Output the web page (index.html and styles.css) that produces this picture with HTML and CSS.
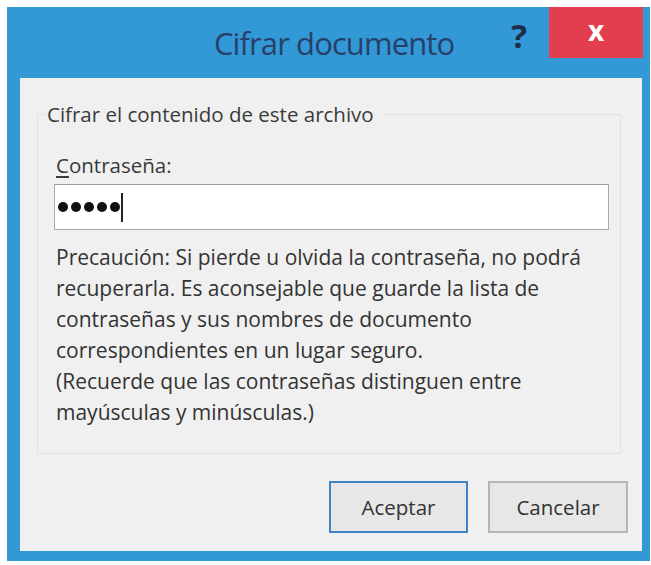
FILE: index.html
```html
<!DOCTYPE html>
<html lang="es">
<head>
<meta charset="utf-8">
<title>Cifrar documento</title>
<link rel="stylesheet" href="styles.css">
</head>
<body>
<div class="window">
  <div class="titlebar">
    <div class="title">Cifrar documento</div>
    <div class="help">?</div>
    <div class="close">x</div>
  </div>
  <div class="panel">
    <fieldset class="group">
      <legend class="group-title">Cifrar el contenido de este archivo</legend>
      <label class="field-label" for="pwd"><span class="accel">C</span>ontraseña:</label>
      <div class="input" id="pwd">
        <span class="dots"><i></i><i></i><i></i><i></i><i></i></span><span class="caret"></span>
      </div>
      <p class="note">Precaución: Si pierde u olvida la contraseña, no podrá recuperarla. Es aconsejable que guarde la lista de contraseñas y sus nombres de documento correspondientes en un lugar seguro.<br>(Recuerde que las contraseñas distinguen entre mayúsculas y minúsculas.)</p>
    </fieldset>
    <div class="actions">
      <button class="btn btn-default">Aceptar</button>
      <button class="btn">Cancelar</button>
    </div>
  </div>
</div>
</body>
</html>
```

FILE: styles.css
```css
html, body {
  margin: 0;
  padding: 0;
  background: #ffffff;
}

body {
  font-family: "Open Sans", "Noto Sans", sans-serif;
  color: #333333;
}

.window {
  width: 643px;
  height: 554px;
  margin: 7px 0 0 7px;
  background: #3398d6;
  display: flex;
  flex-direction: column;
  box-sizing: border-box;
}

/* title bar: centered caption, help glyph and red close button */
.titlebar {
  height: 71px;
  display: flex;
  align-items: flex-start;
}

.title {
  flex: 1;
  text-align: center;
  font-size: 31px;
  color: #27406a;
  letter-spacing: -0.9px;
  line-height: 72px;
  padding-left: 150px;
}

.help {
  font-size: 33px;
  font-weight: 700;
  color: #1d2f48;
  line-height: 58px;
  margin-right: 22px;
}

.close {
  width: 94px;
  height: 51px;
  margin-right: 7px;
  background: #e23e4e;
  color: #ffffff;
  font-size: 28px;
  font-weight: 700;
  text-align: center;
  line-height: 46px;
}

.panel {
  flex: 1;
  margin: 0 8px 10px 13px;
  background: #f0f0f0;
  display: flex;
  flex-direction: column;
}

.group {
  margin: 24px 21px 0 17px;
  padding: 0 11px 25px 18px;
  border: 1px solid #e0e0e0;
  min-width: 0;
}

.group-title {
  font-size: 20.5px;
  padding: 0 8px 0 3px;
  margin-left: -12px;
  line-height: 24px;
  color: #3a3a3a;
}

.field-label {
  display: block;
  margin-top: 25px;
  font-size: 20.5px;
  line-height: 28px;
  color: #3a3a3a;
}

.accel {
  text-decoration: underline;
  text-underline-offset: 3px;
}

.input {
  margin: 5px 0 0 -2px;
  height: 44px;
  background: #ffffff;
  border: 1px solid #a9a9a9;
  border-top-color: #9a9a9a;
  display: flex;
  align-items: center;
  padding-left: 3px;
}

.dots {
  display: flex;
  gap: 3px;
}

.dots i {
  width: 10px;
  height: 10px;
  border-radius: 50%;
  background: #111111;
}

.caret {
  width: 2px;
  height: 29px;
  background: #222222;
  margin-left: 1px;
}

.note {
  margin: 12px 0 0;
  padding-right: 14px;
  max-width: 540px;
  font-size: 21px;
  line-height: 31px;
  color: #333333;
}

.actions {
  margin-top: auto;
  display: flex;
  justify-content: flex-end;
  gap: 20px;
  padding: 0 14px 18px 0;
}

.btn {
  width: 140px;
  height: 52px;
  font-family: "Open Sans", "Noto Sans", sans-serif;
  font-size: 20.5px;
  color: #333333;
  background: #e7e7e7;
  border: 2px solid #b5b5b5;
  padding: 0;
}

.btn-default {
  width: 139px;
  border-color: #3f84c2;
}
```
